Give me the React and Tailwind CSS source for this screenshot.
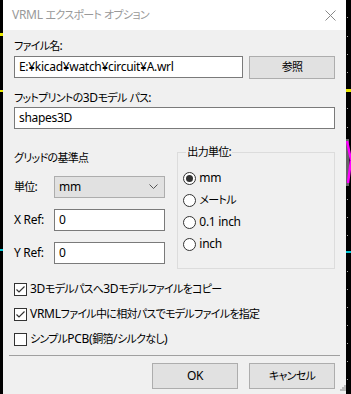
import React from "react";

const font = { fontFamily: '"Noto Sans", "Noto Sans CJK JP", sans-serif' };

function J({ children }) {
  const parts = String(children).split(/([\u3000-\u30ff\u4e00-\u9fff\uff00-\uffef]+)/);
  return (
    <>
      {parts.map((p, i) =>
        i % 2 === 1 ? (
          <span key={i} className="text-[11px] tracking-[-0.7px]">{p}</span>
        ) : (
          <React.Fragment key={i}>{p}</React.Fragment>
        )
      )}
    </>
  );
}

function Radio({ checked, label }) {
  return (
    <div className="flex items-center h-[22px]">
      <span className="w-[13px] h-[13px] rounded-full border border-[#333] bg-white flex items-center justify-center shrink-0">
        {checked && <span className="w-[7px] h-[7px] rounded-full bg-[#333]" />}
      </span>
      <span className="ml-[3px] text-[12px] leading-[16px] text-black"><J>{label}</J></span>
    </div>
  );
}

function Check({ checked, label }) {
  return (
    <div className="flex items-center h-[16px]">
      <span className="w-[13px] h-[13px] border border-[#333] bg-white flex items-center justify-center shrink-0">
        {checked && (
          <svg width="11" height="11" viewBox="0 0 11 11">
            <path d="M1.5 5.5 L4 8 L9.5 2.5" fill="none" stroke="#333" strokeWidth="1.2" />
          </svg>
        )}
      </span>
      <span className="ml-[3px] text-[12px] leading-[16px] text-black whitespace-nowrap"><J>{label}</J></span>
    </div>
  );
}

export default function App() {
  return (
    <div
      className="relative w-[351px] h-[394px] bg-black overflow-hidden tracking-[-0.3px] [font-feature-settings:'palt']"
      style={font}
    >
      {/* canvas behind */}
      <svg className="absolute left-0 top-0" width="351" height="394">
        <rect x="0" y="33" width="3" height="3" fill="#e8e800" />
        <rect x="0" y="90" width="3" height="2" fill="#e8e800" />
        <rect x="0" y="249" width="3" height="2" fill="#00c8d8" />
        {[17, 36, 54, 72, 108, 127, 199, 217, 235, 271, 289, 307, 325, 343, 361, 379].map((y) => (
          <rect key={y} x="347" y={y} width="1" height="1" fill="#aaa" />
        ))}
        <rect x="346" y="89" width="5" height="3" fill="#e8e800" />
        <rect x="346" y="139" width="3" height="47" fill="#666" />
        <path d="M347 141 L351 160 L348 183" stroke="#ff00ff" strokeWidth="2.5" fill="none" />
        <rect x="346" y="251" width="5" height="2" fill="#00c8d8" />
      </svg>

      <div className="absolute left-[3px] top-0 w-[343px] h-[394px] flex flex-col">
        {/* title bar */}
        <div className="h-[30px] bg-white flex items-center justify-between pl-[9px] pr-[10px] shrink-0">
          <span className="text-[12px] text-[#999]"><J>VRML エクスポート オプション</J></span>
          <svg width="11" height="11" viewBox="0 0 11 11">
            <path d="M0.5 0.5 L10.5 10.5 M10.5 0.5 L0.5 10.5" stroke="#888" strokeWidth="1" />
          </svg>
        </div>

        {/* body */}
        <div className="flex-1 bg-[#f0f0f0] flex flex-col px-[11px] relative">
          <div className="mt-[8px] text-[12px] leading-[16px] text-black"><J>ファイル名:</J></div>
          <div className="mt-[2px] flex">
            <div className="w-[229px] h-[22px] border border-[#7a7a7a] bg-white flex items-center pl-[4px] text-[12px] text-black">
              E:¥kicad¥watch¥circuit¥A.wrl
            </div>
            <div className="ml-[6px] w-[86px] h-[23px] border border-[#adadad] bg-[#e1e1e1] flex items-center justify-center text-[12px] text-black">
              <J>参照</J>
            </div>
          </div>

          <div className="mt-[11px] text-[12px] leading-[16px] text-black"><J>フットプリントの3Dモデル パス:</J></div>
          <div className="mt-[1px] w-[321px] h-[22px] border border-[#7a7a7a] bg-white flex items-center pl-[4px] text-[12px] text-black">
            shapes3D
          </div>

          <div className="flex mt-[23px]">
            {/* left column */}
            <div className="w-[167px] flex flex-col">
              <div className="mt-[-2px] text-[12px] leading-[16px] text-black"><J>グリッドの基準点</J></div>
              <div className="mt-[10px] flex items-center">
                <span className="w-[40px] text-[12px] text-black"><J>単位:</J></span>
                <div className="w-[111px] h-[22px] border border-[#adadad] bg-[#e1e1e1] flex items-center justify-between pl-[4px] pr-[6px] text-[12px] text-black">
                  <span>mm</span>
                  <svg width="9" height="6" viewBox="0 0 9 6">
                    <path d="M0.5 0.5 L4.5 4.5 L8.5 0.5" fill="none" stroke="#555" strokeWidth="1" />
                  </svg>
                </div>
              </div>
              <div className="mt-[11px] flex items-center">
                <span className="w-[40px] text-[12px] text-black">X Ref:</span>
                <div className="w-[111px] h-[22px] border border-[#7a7a7a] bg-white flex items-center pl-[4px] text-[12px] text-black">0</div>
              </div>
              <div className="mt-[11px] flex items-center">
                <span className="w-[40px] text-[12px] text-black">Y Ref:</span>
                <div className="w-[111px] h-[22px] border border-[#7a7a7a] bg-white flex items-center pl-[4px] text-[12px] text-black">0</div>
              </div>
            </div>

            {/* output unit group */}
            <div className="relative w-[161px] h-[117px] border border-[#dcdcdc] flex flex-col pl-[5px] pt-[14px]">
              <span className="absolute left-[8px] top-[-9px] bg-[#f0f0f0] px-[1px] text-[12px] leading-[16px] text-black"><J>出力単位:</J></span>
              <Radio checked label="mm" />
              <Radio label="メートル" />
              <Radio label="0.1 inch" />
              <Radio label="inch" />
            </div>
          </div>

          <div className="mt-[12px] flex flex-col gap-[9px]">
            <Check checked label="3Dモデルパスへ3Dモデルファイルをコピー" />
            <Check checked label="VRMLファイル中に相対パスでモデルファイルを指定" />
            <Check label="シンプルPCB(銅箔/シルクなし)" />
          </div>

          <div className="mt-[8px] ml-[-5px] w-[331px] h-[1px] bg-[#a0a0a0]" />

          <div className="mt-[7px] flex justify-end gap-[11px]">
            <div className="w-[86px] h-[26px] border border-[#adadad] bg-[#e1e1e1] flex items-center justify-center text-[12px] text-black">OK</div>
            <div className="w-[86px] h-[26px] border border-[#adadad] bg-[#e1e1e1] flex items-center justify-center text-[12px] text-black"><J>キャンセル</J></div>
          </div>

          <svg className="absolute right-[0px] bottom-[2px]" width="7" height="7" viewBox="0 0 7 7">
            {[[5, 0], [3, 2], [5, 2], [1, 4], [3, 4], [5, 4]].map(([x, y], i) => (
              <rect key={i} x={x} y={y} width="2" height="2" fill="#bbb" />
            ))}
          </svg>
        </div>
      </div>
    </div>
  );
}
